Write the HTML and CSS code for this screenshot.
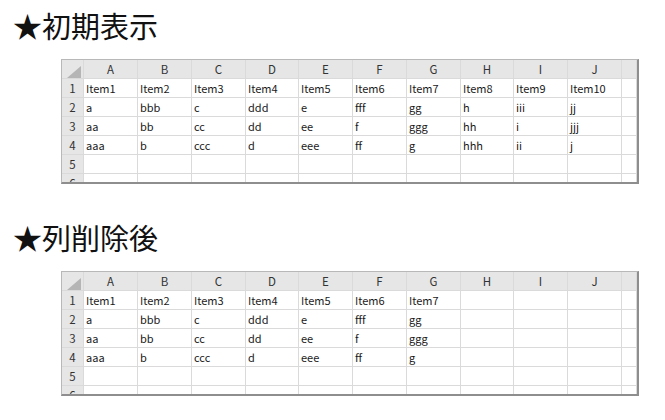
FILE: index.html
```html
<html lang="ja">
    <head>
        <meta charset="UTF-8">
        <meta name="viewport" content="width=device-width, initial-scale=1.0">
        <title>列削除</title>

        <link rel="stylesheet" href="styles.css">
    </head>
    <body>

        <h1 class="title">★初期表示</h1>

        <div class="sheet">
            <div class="hd corner"><span class="tri"></span></div>
            <div class="hd">A</div><div class="hd">B</div><div class="hd">C</div><div class="hd">D</div><div class="hd">E</div>
            <div class="hd">F</div><div class="hd">G</div><div class="hd">H</div><div class="hd">I</div><div class="hd">J</div><div class="hd"></div>

            <div class="hd">1</div>
            <div>Item1</div><div>Item2</div><div>Item3</div><div>Item4</div><div>Item5</div>
            <div>Item6</div><div>Item7</div><div>Item8</div><div>Item9</div><div>Item10</div><div></div>

            <div class="hd">2</div>
            <div>a</div><div>bbb</div><div>c</div><div>ddd</div><div>e</div>
            <div>fff</div><div>gg</div><div>h</div><div>iii</div><div>jj</div><div></div>

            <div class="hd">3</div>
            <div>aa</div><div>bb</div><div>cc</div><div>dd</div><div>ee</div>
            <div>f</div><div>ggg</div><div>hh</div><div>i</div><div>jjj</div><div></div>

            <div class="hd">4</div>
            <div>aaa</div><div>b</div><div>ccc</div><div>d</div><div>eee</div>
            <div>ff</div><div>g</div><div>hhh</div><div>ii</div><div>j</div><div></div>

            <div class="hd">5</div>
            <div></div><div></div><div></div><div></div><div></div>
            <div></div><div></div><div></div><div></div><div></div><div></div>

            <div class="hd">6</div>
            <div></div><div></div><div></div><div></div><div></div>
            <div></div><div></div><div></div><div></div><div></div><div></div>
        </div>

        <h1 class="title second">★列削除後</h1>

        <div class="sheet">
            <div class="hd corner"><span class="tri"></span></div>
            <div class="hd">A</div><div class="hd">B</div><div class="hd">C</div><div class="hd">D</div><div class="hd">E</div>
            <div class="hd">F</div><div class="hd">G</div><div class="hd">H</div><div class="hd">I</div><div class="hd">J</div><div class="hd"></div>

            <div class="hd">1</div>
            <div>Item1</div><div>Item2</div><div>Item3</div><div>Item4</div><div>Item5</div>
            <div>Item6</div><div>Item7</div><div></div><div></div><div></div><div></div>

            <div class="hd">2</div>
            <div>a</div><div>bbb</div><div>c</div><div>ddd</div><div>e</div>
            <div>fff</div><div>gg</div><div></div><div></div><div></div><div></div>

            <div class="hd">3</div>
            <div>aa</div><div>bb</div><div>cc</div><div>dd</div><div>ee</div>
            <div>f</div><div>ggg</div><div></div><div></div><div></div><div></div>

            <div class="hd">4</div>
            <div>aaa</div><div>b</div><div>ccc</div><div>d</div><div>eee</div>
            <div>ff</div><div>g</div><div></div><div></div><div></div><div></div>

            <div class="hd">5</div>
            <div></div><div></div><div></div><div></div><div></div>
            <div></div><div></div><div></div><div></div><div></div><div></div>

            <div class="hd">6</div>
            <div></div><div></div><div></div><div></div><div></div>
            <div></div><div></div><div></div><div></div><div></div><div></div>
        </div>

    </body>
</html>
```

FILE: styles.css
```css
html, body{
    padding: 0;
    margin: 0;
    background: #fff;
    font-family: "Noto Sans CJK JP", "Noto Sans", sans-serif;
}

.title{
    margin: 9px 0 0 13px;
    font-size: 29px;
    line-height: 32px;
    font-weight: normal;
    color: #111;
}

.title.second{
    margin-top: 37px;
}

/* column widths follow the screenshot: two of the ten are a pixel narrower */
.sheet{
    display: grid;
    grid-template-columns: 21px 53px 53px 53px 52px 53px 53px 53px 52px 53px 53px 14px;
    grid-auto-rows: 18px;
    gap: 1px;
    width: 575px;
    height: 122px;
    margin: 18px 0 0 61px;
    overflow: hidden;
    background: #dadada;
    border-top: 1px solid #b8b8b8;
    border-left: 1px solid #b8b8b8;
    border-right: 2px solid #8e8e8e;
    border-bottom: 2px solid #8e8e8e;
}

.sheet div{
    background: #fff;
    padding-left: 2px;
    font-size: 11px;
    line-height: 18px;
    color: #1a1a1a;
    white-space: nowrap;
    overflow: hidden;
}

.sheet .hd{
    background: #e6e6e6;
    padding-left: 0;
    text-align: center;
    font-size: 11.5px;
    color: #333;
}

.sheet .corner{
    display: flex;
    justify-content: flex-end;
    align-items: flex-end;
    padding-right: 2px;
}

.tri{
    width: 14px;
    height: 12px;
    background: #b5b5b5;
    clip-path: polygon(100% 0, 100% 100%, 0 100%);
}
```
